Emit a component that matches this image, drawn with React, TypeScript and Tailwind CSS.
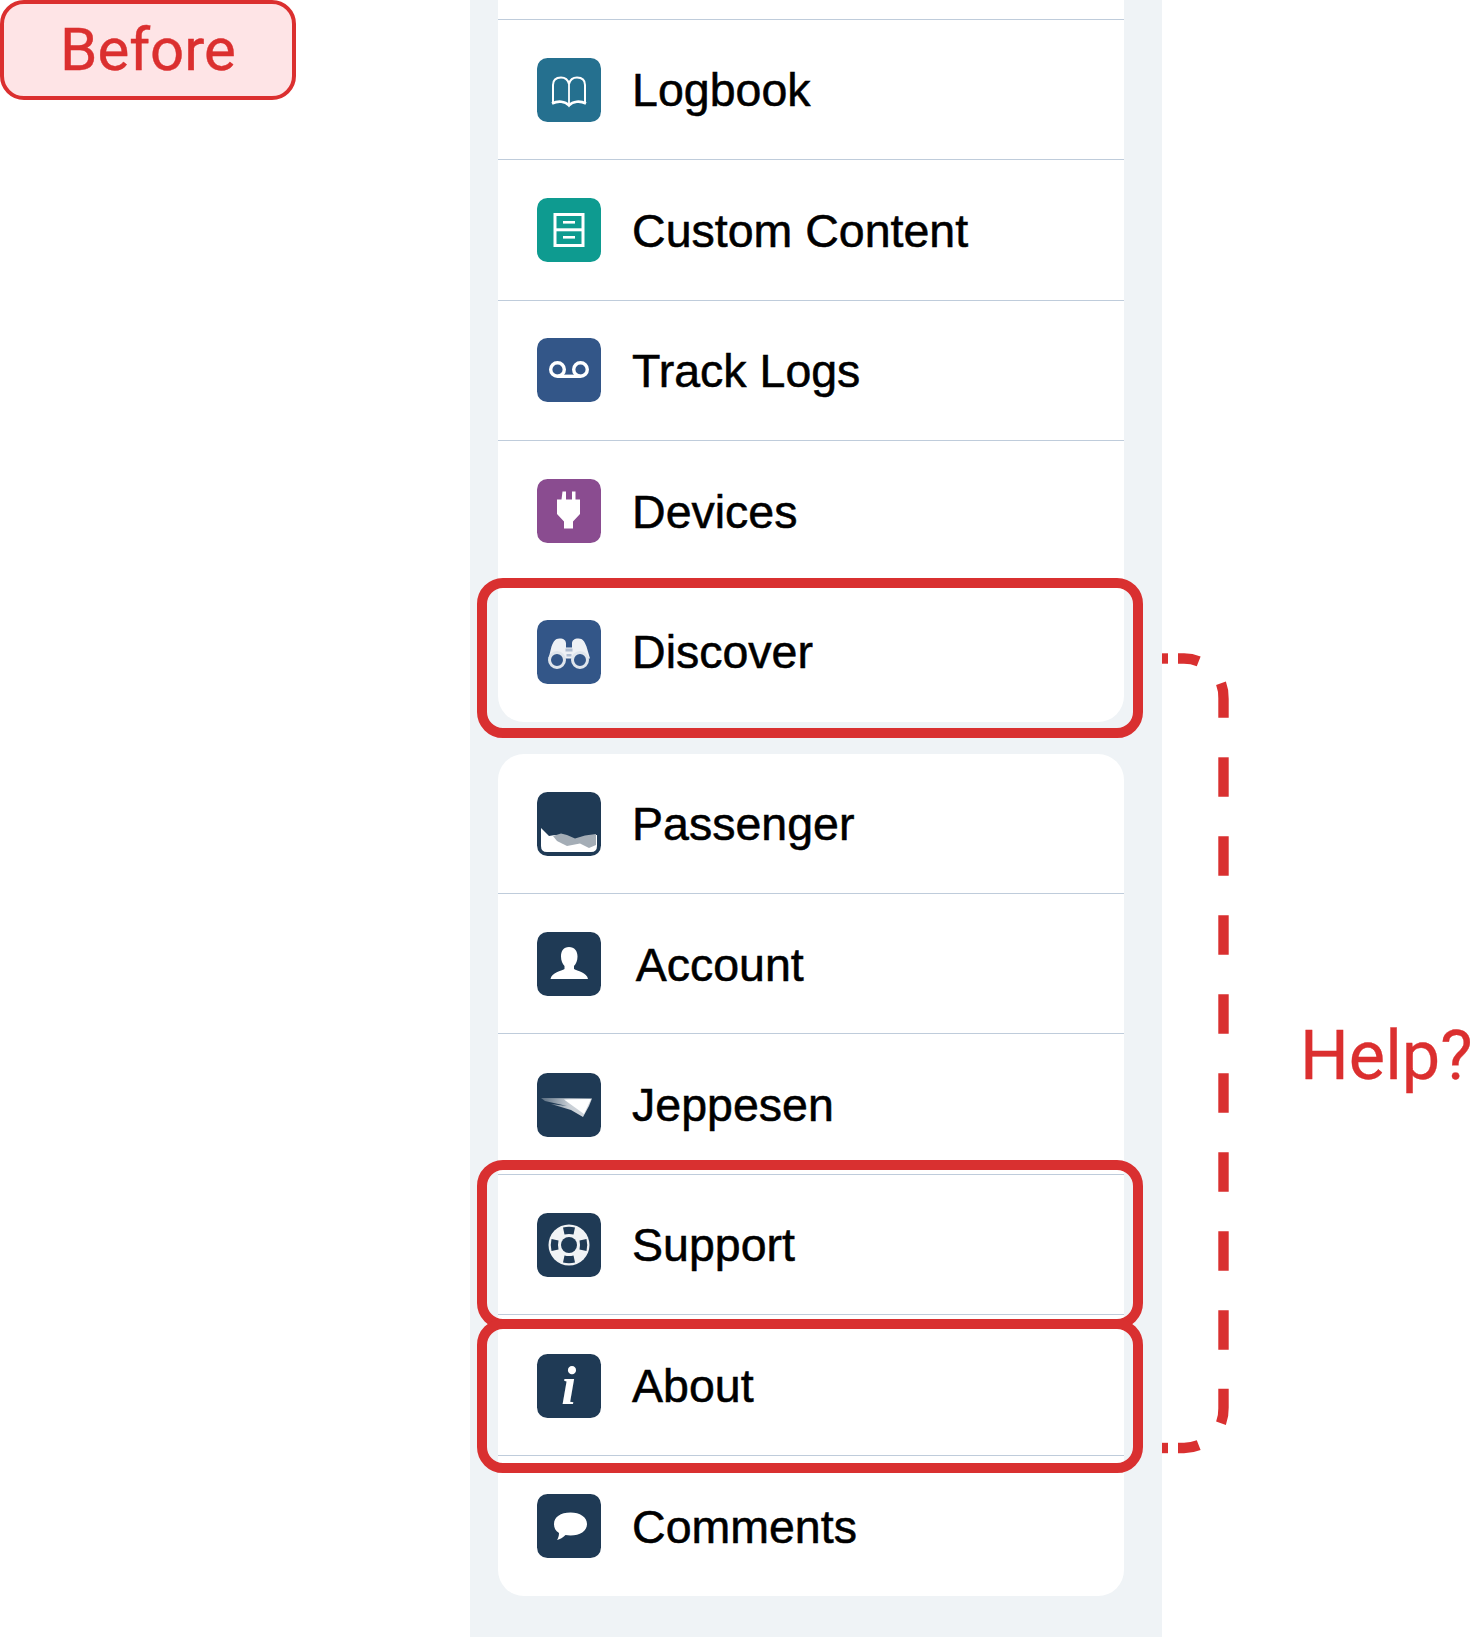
import React from "react";

const D = "#1f3a55";

function Tile({ bg, children }: { bg: string; children: React.ReactNode }) {
  return (
    <svg width="64" height="64" viewBox="0 0 64 64" className="shrink-0">
      <rect width="64" height="64" rx="10.5" fill={bg} />
      {children}
    </svg>
  );
}

const Book = () => (
  <Tile bg="#25708f">
    <path d="M16 44V27C16 22 19 19.500 24 19.500C28 19.500 31 22 32 26C33 22 36 19.500 40 19.500C45 19.500 48 22 48 27V44" fill="none" stroke="#fff" strokeWidth="2" />
    <path d="M32 26V46" stroke="#fff" strokeWidth="1.800" />
    <path d="M15 45.500C21 42.500 28 43 32 47.500C36 43 43 42.500 49 45.500" fill="none" stroke="#fff" strokeWidth="2.600" />
  </Tile>
);
const Cabinet = () => (
  <Tile bg="#0e9b90">
    <rect x="18" y="16.500" width="28" height="31" fill="none" stroke="#fff" strokeWidth="3" />
    <path d="M18 31.800H46" stroke="#fff" strokeWidth="3" />
    <rect x="26" y="23" width="12" height="2.600" fill="#fff" />
    <rect x="26" y="38" width="12" height="2.600" fill="#fff" />
  </Tile>
);
const Voicemail = () => (
  <Tile bg="#335688">
    <circle cx="20.500" cy="31.500" r="6.800" fill="none" stroke="#fff" strokeWidth="3.400" />
    <circle cx="43.500" cy="31.500" r="6.800" fill="none" stroke="#fff" strokeWidth="3.400" />
    <path d="M20.500 38.300H43.500" stroke="#fff" strokeWidth="3.400" />
  </Tile>
);
const Plug = () => (
  <Tile bg="#8a4c90">
    <path d="M25.500 12.500h3.500v8h6v-8h3.500v8h4.500v14.500l-7 7.500v7h-9v-7l-7-7.500v-14.500h4.500z" fill="#fff" />
  </Tile>
);
const Binoculars = () => (
  <Tile bg="#335688">
    <path d="M22.500 18.500c4.500 0 6.500 2 6.500 5v4h6v-4c0-3 2-5 6.500-5s6 3 8 8l3.500 12H11.500l3-12c2-5 3.500-8 8-8z" fill="#eef1f5" />
    <circle cx="20" cy="40" r="7.500" fill="#335688" stroke="#dfe5ec" strokeWidth="3" />
    <circle cx="43" cy="40" r="7.500" fill="#335688" stroke="#dfe5ec" strokeWidth="3" />
    <rect x="28.500" y="28.500" width="7" height="3" fill="#aebcd0" />
    <rect x="29.500" y="34" width="5" height="2.500" fill="#aebcd0" />
  </Tile>
);
const Passenger = () => (
  <Tile bg={D}>
    <path d="M4 36L12 44L18 43L30 44L38 48L48 45L59 43L60 43V54Q60 60 54 60H10Q4 60 4 54Z" fill="#fff" />
    <path d="M16 44L24 41.500L30 43L38 46.500L48 43.500L59 42V53L52 56L43 51.500L30 54L20 49Z" fill="#a4adb6" />
  </Tile>
);
const Person = () => (
  <Tile bg={D}>
    <path d="M32 15c5.500 0 8.500 4 8.500 9.500 0 4-1.500 7.500-3.500 9.500v3c3 2 13 3.500 14 10H13.500c1-6.500 11-8 14-10v-3c-2-2-3.500-5.500-3.500-9.500C24 19 26.500 15 32 15z" fill="#fff" />
  </Tile>
);
const Jeppesen = () => (
  <Tile bg={D}>
    <defs>
      <linearGradient id="jp" x1="0" y1="0" x2="1" y2="0">
        <stop offset="0" stopColor="#fff" stopOpacity="0.25" />
        <stop offset="0.55" stopColor="#fff" stopOpacity="0.75" />
        <stop offset="1" stopColor="#cfd4da" />
      </linearGradient>
    </defs>
    <path d="M4 25L55 25.500L52 33L46 44L34 37L14 31L30 33L8 28Z" fill="url(#jp)" />
    <path d="M27 26.500L54 26L47 41Z" fill="#fff" />
  </Tile>
);
const Ring = () => (
  <Tile bg={D}>
    <circle cx="32" cy="32" r="20.500" fill="#f1f3f5" />
    <circle cx="32" cy="32" r="8" fill={D} />
    <path d="M26 14.500Q32 13 38 14.500L36.500 21.500Q32 20.500 27.500 21.500Z" fill={D} />
    <path d="M26 49.500Q32 51 38 49.500L36.500 42.500Q32 43.500 27.500 42.500Z" fill={D} />
    <path d="M14.500 26Q13 32 14.500 38L21.500 36.500Q20.500 32 21.500 27.500Z" fill={D} />
    <path d="M49.500 26Q51 32 49.500 38L42.500 36.500Q43.500 32 42.500 27.500Z" fill={D} />
  </Tile>
);
const Info = () => (
  <div className="relative flex h-16 w-16 shrink-0 items-center justify-center rounded-[10.5px] bg-[#1f3a55]">
    <span className="font-['Liberation_Serif',serif] text-[54px] font-bold italic leading-none text-white">i</span>
  </div>
);
const Bubble = () => (
  <Tile bg={D}>
    <path d="M33.500 18.500c9.500 0 16.500 4.500 16.500 11.500S43 41.500 33.500 41.500c-2 0-3.500-.2-5-.5-2.500 2.500-5.500 4.500-8.500 5 1-1.500 2-4 2-7-3.500-2-5-5-5-9 0-7 6.500-11.500 16.500-11.500z" fill="#fff" />
  </Tile>
);

function Row({ icon, label, last, nudge, low, tight }: { icon: React.ReactNode; label: string; last?: boolean; nudge?: boolean; low?: boolean; tight?: boolean }) {
  return (
    <div className={`flex h-[140.4px] items-center gap-8 pl-[38.7px] ${last ? "" : "border-b-[1.5px] border-[#bfccdb]"} ${low ? "pt-[1.5px]" : ""}`}>
      {icon}
      <span className={`-ml-[0.6px] font-['Liberation_Sans',Arial,sans-serif] text-[46.5px] leading-none text-black [-webkit-text-stroke:0.55px_#000] ${low || tight ? "pt-[1px]" : "pt-[2px]"} ${nudge ? "ml-[3px]" : ""}`}>
        {label}
      </span>
    </div>
  );
}

export default function App() {
  return (
    <div className="relative flex h-[1637px] w-[1475px] overflow-hidden bg-white">
      <div className="w-[470px] shrink-0">
        <div className="flex h-[100px] w-[296px] items-center justify-center rounded-[24px] border-[4px] border-[#db2f2f] bg-[#fee4e6] font-['Roboto',sans-serif] text-[60px] leading-none text-[#db2f2f] [-webkit-text-stroke:0.4px_#db2f2f]">
          Before
        </div>
      </div>

      <div className="h-full w-[692px] shrink-0 bg-[#eff3f6] pl-[28px] pr-[38px]">
        <div className="rounded-b-[26px] bg-white">
          <div className="h-[20px] border-b-[1.5px] border-[#bfccdb]" />
          <Row icon={<Book />} label="Logbook" />
          <Row icon={<Cabinet />} label="Custom Content" />
          <Row icon={<Voicemail />} label="Track Logs" />
          <Row icon={<Plug />} label="Devices" />
          <Row icon={<Binoculars />} label="Discover" last tight />
        </div>
        <div className="mt-[31.6px] rounded-[26px] bg-white">
          <Row icon={<Passenger />} label="Passenger" low />
          <Row icon={<Person />} label="Account" nudge low />
          <Row icon={<Jeppesen />} label="Jeppesen" low />
          <Row icon={<Ring />} label="Support" low />
          <Row icon={<Info />} label="About" low />
          <Row icon={<Bubble />} label="Comments" last low />
        </div>
      </div>

      <div className="pl-[138px] pt-[1022px] font-['Roboto',sans-serif] text-[68.5px] leading-none text-[#db2f2f] [-webkit-text-stroke:0.3px_#db2f2f]">Help?</div>

      {/* highlight frames lying over the list */}
      <div className="absolute left-[476.7px] top-[578.3px] h-[159.4px] w-[666px] rounded-[26px] border-[10px] border-[#d93030]" />
      <div className="absolute left-[476.7px] top-[1160px] h-[169px] w-[666px] rounded-[26px] border-[10px] border-[#d93030]" />
      <div className="absolute left-[476.7px] top-[1319.3px] h-[153.4px] w-[666px] rounded-[26px] border-[10px] border-[#d93030]" />

      <svg className="absolute left-0 top-0" width="1475" height="1637" viewBox="0 0 1475 1637" fill="none" stroke="#d93030" strokeWidth="10.4">
        <path d="M1162 658.500H1168" />
        <path d="M1178 658.500H1183.500A40 40 0 0 1 1198.700 661.300" />
        <path d="M1221 683.300A40 40 0 0 1 1223.500 698.500V717.700" />
        <path d="M1223.500 757.300V1350" strokeDasharray="39.4 39.6" />
        <path d="M1223.500 1388.800V1408A40 40 0 0 1 1221 1423.200" />
        <path d="M1198.700 1445.200A40 40 0 0 1 1183.500 1448H1178" />
        <path d="M1168 1448H1162" />
      </svg>
    </div>
  );
}
